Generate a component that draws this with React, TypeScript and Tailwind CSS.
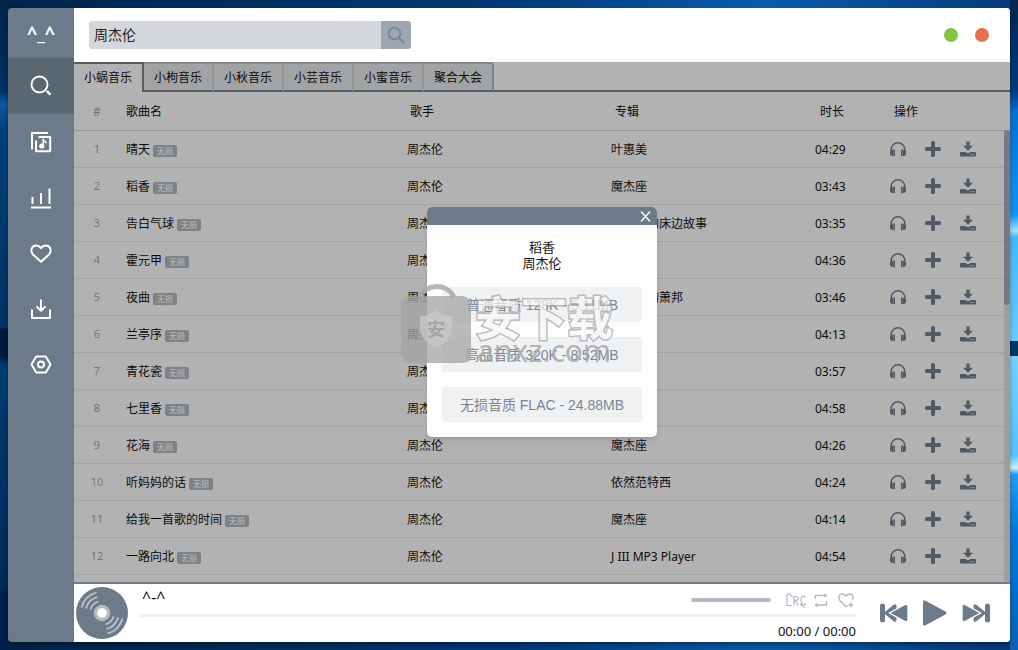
interface Song {
  name: string;
  artist: string;
  album: string;
  duration: string;
}

const sources = ["小蜗音乐", "小枸音乐", "小秋音乐", "小芸音乐", "小蜜音乐", "聚合大会"];

const songs: Song[] = [
  { name: "晴天", artist: "周杰伦", album: "叶惠美", duration: "04:29" },
  { name: "稻香", artist: "周杰伦", album: "魔杰座", duration: "03:43" },
  { name: "告白气球", artist: "周杰伦", album: "周杰伦的床边故事", duration: "03:35" },
  { name: "霍元甲", artist: "周杰伦", album: "霍元甲", duration: "04:36" },
  { name: "夜曲", artist: "周杰伦", album: "十一月的萧邦", duration: "03:46" },
  { name: "兰亭序", artist: "周杰伦", album: "魔杰座", duration: "04:13" },
  { name: "青花瓷", artist: "周杰伦", album: "我很忙", duration: "03:57" },
  { name: "七里香", artist: "周杰伦", album: "七里香", duration: "04:58" },
  { name: "花海", artist: "周杰伦", album: "魔杰座", duration: "04:26" },
  { name: "听妈妈的话", artist: "周杰伦", album: "依然范特西", duration: "04:24" },
  { name: "给我一首歌的时间", artist: "周杰伦", album: "魔杰座", duration: "04:14" },
  { name: "一路向北", artist: "周杰伦", album: "J III MP3 Player", duration: "04:54" },
];

const qualities = [
  "普通音质 128K - 5.11MB",
  "高品音质 320K - 8.52MB",
  "无损音质 FLAC - 24.88MB",
];

const navItems = [
  {
    label: "搜索",
    icon: (
      <>
        <circle cx="9.5" cy="9.5" r="8" />
        <path d="M16.600 15.800 20.500 19.700" strokeWidth="2.600" />
      </>
    ),
  },
  {
    label: "歌单",
    icon: (
      <>
        <path d="M2 18.500V2H18" />
        <path d="M8.500 6H20.200V20.200H6V9.500" />
        <path d="M13.200 15V8.300c.3 1.800 2.600 1.800 2.800 4" strokeWidth="1.600" />
        <circle cx="11.800" cy="15" r="1.600" fill="currentColor" />
      </>
    ),
  },
  {
    label: "排行榜",
    icon: <path d="M1 20.500H21M2.500 17V10M11 17V6M19.500 17V1.500" />,
  },
  {
    label: "收藏",
    icon: (
      <path d="M11 18.800 3.200 11.700C-.2 8.300 1.400 2.500 6.300 2.500c2 0 3.500 1 4.700 2.600C12.200 3.500 13.700 2.500 15.700 2.500c4.900 0 6.500 5.800 3.100 9.200L11 18.800Z" />
    ),
  },
  {
    label: "下载",
    icon: <path d="M2 10.500V19H20V10.500M11 0.500V12M6.500 7.500 11 11.800 15.500 7.500" />,
  },
  {
    label: "设置",
    icon: (
      <>
        <path d="M6.200 1.500H15.800L20.500 9.500 15.800 17.500H6.200L1.500 9.500Z" />
        <circle cx="11" cy="9.500" r="3" />
      </>
    ),
  },
];

function Sidebar() {
  return (
    <nav className="flex w-[66px] shrink-0 flex-col bg-[#6d7a89] text-white">
      <div className="flex h-[50px] items-center justify-center text-lg font-bold">
        ^_^
      </div>
      {navItems.map((item, index) => (
        <button
          key={item.label}
          type="button"
          aria-label={item.label}
          className={`grid h-14 place-items-center ${index === 0 ? "bg-[#5a6670]" : ""}`}
        >
          <svg
            viewBox="0 0 22 22"
            className="size-[22px]"
            fill="none"
            stroke="currentColor"
            strokeWidth="2"
            strokeLinejoin="round"
          >
            {item.icon}
          </svg>
        </button>
      ))}
    </nav>
  );
}

function Header() {
  return (
    <header className="flex h-[54px] shrink-0 items-center justify-between bg-white pr-[21px] pl-[15px]">
      <form className="flex h-7">
        <input
          type="text"
          aria-label="搜索歌曲"
          defaultValue="周杰伦"
          className="w-[292px] rounded-l-[3px] bg-[#d3d7dc] px-[5px] text-sm text-[#222] outline-none"
        />
        <button
          type="button"
          aria-label="搜索"
          className="grid w-[30px] place-items-center rounded-r-[3px] bg-[#9ca7b2] text-[#7b8896]"
        >
          <svg viewBox="0 0 18 18" className="size-[18px]" fill="none" stroke="currentColor">
            <circle cx="7.500" cy="7.500" r="5.800" strokeWidth="2" />
            <path d="M11.800 11.800 16.500 16.500" strokeWidth="2.400" strokeLinecap="round" />
          </svg>
        </button>
      </form>
      <div className="flex gap-[17px]">
        <button type="button" aria-label="最小化" className="size-3.5 rounded-full bg-[#86c440]" />
        <button type="button" aria-label="关闭" className="size-3.5 rounded-full bg-[#e8714d]" />
      </div>
    </header>
  );
}

function SourceTabs() {
  return (
    <div className="flex h-[30px] shrink-0 text-xs">
      {sources.map((source, index) => (
        <button
          key={source}
          type="button"
          className={
            index === 0
              ? "w-[70px] border-t-2 border-r-2 border-[#7a8992]"
              : "w-[70px] border-t-2 border-r-2 border-b-2 border-t-[#bac2c7] border-r-[#cfd4d8] border-b-[#7a8992] bg-[#e8eaec] pt-0.5 last-of-type:rounded-tr-[3px] last-of-type:border-r-[#b0b8be]"
          }
        >
          {source}
        </button>
      ))}
      <div className="flex-1 border-b-2 border-[#7a8992]" />
    </div>
  );
}

function SongActions() {
  return (
    <div className="flex items-center gap-[19px] text-[#718290]">
      <button type="button" aria-label="试听">
        <svg viewBox="0 0 16 16" className="size-4" fill="currentColor">
          <path
            d="M1.200 10.500V8.500a6.800 6.800 0 0 1 13.600 0V10.500"
            fill="none"
            stroke="currentColor"
            strokeWidth="1.500"
          />
          <path d="M3 8.800V15Q0 15 0 12.500V11Q0 9 3 8.800ZM13 8.800V15Q16 15 16 12.500V11Q16 9 13 8.800Z" />
          <path d="M3.300 8.500H5V15.300H3.300ZM11 8.500H12.700V15.300H11Z" />
        </svg>
      </button>
      <button type="button" aria-label="添加">
        <svg viewBox="0 0 16 16" className="size-4" fill="currentColor">
          <rect x="6" width="4" height="16" rx="1.500" />
          <rect y="6" width="16" height="4" rx="1.500" />
        </svg>
      </button>
      <button type="button" aria-label="下载">
        <svg viewBox="0 0 16 16" className="size-4" fill="currentColor">
          <path d="M6.300 0.500h3.400v4.300h3.300L8 9.800 3 4.800h3.300Z" />
          <path
            d="M1 11h4.300L8 12.500 10.700 11H15q1 0 1 1v2.500q0 1-1 1H1q-1 0-1-1V12q0-1 1-1ZM10.800 13v1h1v-1Zm2.400 0v1h1v-1Z"
            fillRule="evenodd"
          />
        </svg>
      </button>
    </div>
  );
}

function SongTable() {
  return (
    <table className="w-full table-fixed text-left text-xs">
      <thead>
        <tr className="h-[38px] border-b border-[#d8d8d8]">
          <th className="w-[46px] pt-0.5 text-center font-normal text-[#aaa]">#</th>
          <th className="px-1.5 pt-0.5 font-normal">歌曲名</th>
          <th className="w-[204px] pt-0.5 pl-[9px] font-normal">歌手</th>
          <th className="w-[204px] pt-0.5 pl-2.5 font-normal">专辑</th>
          <th className="w-[71px] pt-0.5 pl-[11px] font-normal">时长</th>
          <th className="w-[130px] pt-0.5 pl-3.5 font-normal">操作</th>
        </tr>
      </thead>
      <tbody>
        {songs.map((song, index) => (
          <tr key={song.name} className="h-[37px] border-b border-[#ededed]">
            <td className="pt-0.5 text-center text-[11px] text-[#aaa]">{index + 1}</td>
            <td className="px-1.5 pt-0.5">
              <div className="flex items-center gap-[3px]">
                {song.name}
                <span className="mt-[3px] h-3 rounded-[2px] bg-[#b3bbc4] px-1 text-[8px] leading-3 font-medium text-white">
                  无损
                </span>
              </div>
            </td>
            <td className="px-1.5 pt-0.5">{song.artist}</td>
            <td className="px-1.5 pt-0.5">{song.album}</td>
            <td className="px-1.5 pt-0.5">{song.duration}</td>
            <td className="pl-2.5">
              <SongActions />
            </td>
          </tr>
        ))}
      </tbody>
    </table>
  );
}

function Watermark() {
  return (
    <div className="pointer-events-none absolute top-[76px] -left-[26px] flex items-end gap-1">
      <svg viewBox="0 0 70 82" className="h-[82px] w-[70px] shrink-0">
        <path
          d="M19 14A19 19 0 0 1 53 14"
          fill="none"
          stroke="#a9a9a9"
          strokeOpacity="0.85"
          strokeWidth="5"
        />
        <rect y="13" width="70" height="67" rx="9" fill="#a3a3a3" fillOpacity="0.75" />
        <path
          d="M35 27Q42 33 51 33V46Q50 58 35 64 20 58 19 46V33Q28 33 35 27Z"
          fill="#c8c8c8"
          fillOpacity="0.8"
        />
        <text x="35" y="53" textAnchor="middle" fontSize="18" fontWeight="bold" fill="#a5a5a5">
          安
        </text>
      </svg>
      <div className="flex flex-col items-center whitespace-nowrap">
        <span className="text-[46px] leading-10 font-bold text-[#f8f8f9] opacity-70 [-webkit-text-stroke:3px_#a4a4a4] [paint-order:stroke_fill]">
          安下载
        </span>
        <span className="text-3xl leading-7 text-[#a4a6a8] opacity-80">anxz.com</span>
      </div>
    </div>
  );
}

function QualityDialog() {
  return (
    <section
      role="dialog"
      aria-label="选择音质"
      className="relative w-[230px] rounded-[5px] bg-[#fdfdfd] shadow-md"
    >
      <div className="flex h-[18px] items-center justify-end rounded-t-[5px] bg-[#6d7a89] pr-1.5">
        <button type="button" aria-label="关闭" className="text-white">
          <svg viewBox="0 0 11 11" className="size-[11px]" stroke="currentColor" strokeWidth="1.400">
            <path d="M1 0.500 10 10.500M10 0.500 1 10.500" />
          </svg>
        </button>
      </div>
      <div className="px-[15px] pt-3.5 pb-[15px] text-center">
        <h2 className="text-[13px] leading-4">稻香</h2>
        <p className="text-[13px] leading-4">周杰伦</p>
        <div className="mt-4 flex flex-col gap-[15px]">
          {qualities.map((quality) => (
            <button
              key={quality}
              type="button"
              className="h-[35px] rounded-[3px] bg-[#eff1f3] font-['Liberation_Sans','Noto_Sans_CJK_SC',sans-serif] text-sm text-[#7a8694]"
            >
              {quality}
            </button>
          ))}
        </div>
      </div>
      <Watermark />
    </section>
  );
}

function Disc() {
  return (
    <svg viewBox="0 0 52 52" className="size-[52px] shrink-0">
      <circle cx="26" cy="26" r="26" fill="#6d7a89" />
      <g fill="none" stroke="#bcc5ce" strokeWidth="1.800">
        <path d="M5.500 20.500A21.200 21.200 0 0 1 20.500 5.500" />
        <path d="M10 21.500A16.600 16.600 0 0 1 21.500 10" />
        <path d="M14.500 22.500A12 12 0 0 1 22.500 14.500" />
        <path d="M46.500 31.500A21.200 21.200 0 0 1 31.500 46.500" />
        <path d="M42 30.500A16.600 16.600 0 0 1 30.500 42" />
        <path d="M37.500 29.500A12 12 0 0 1 29.500 37.500" />
      </g>
      <circle cx="26" cy="26" r="8.300" fill="#b9b9b9" />
      <circle cx="26" cy="26" r="4.800" fill="#fff" />
    </svg>
  );
}

// Same glyph for both directions, mirrored for "next"
function SkipIcon({ className = "" }: { className?: string }) {
  return (
    <svg viewBox="0 0 28 20" className={`h-5 w-7 ${className}`} fill="currentColor">
      <rect y="0.500" width="5" height="19" rx="2.500" />
      <path d="M3.500 10 14 1.500Q16.500 0.500 16.500 3V17Q16.500 19.500 14 18.500Z" />
      <path
        d="M9.500 10 25 1.500Q28 0.500 28 3.500V16.500Q28 19.500 25 18.500Z"
        stroke="#fff"
        strokeWidth="1.400"
      />
    </svg>
  );
}

function Player() {
  return (
    <footer className="flex h-[60px] shrink-0 items-center border-t-2 border-[#6d7a89] bg-white pr-5 pl-0.5">
      <Disc />
      <div className="ml-3 flex flex-1 flex-col text-[13px]">
        <div className="flex h-7 items-center justify-between">
          <span className="pb-1.5 pl-0.5 text-base">^-^</span>
          <div className="flex items-center text-[#b4bbc4]">
            <div className="mr-[15px] h-1 w-20 rounded-full bg-[#b4bbc4]" />
            <button type="button" aria-label="歌词" className="mr-2">
              <svg viewBox="0 0 20 16" className="h-4 w-5" fill="none" stroke="currentColor" strokeWidth="1.200">
                <path d="M1 2V13.500H6M8 13.500V5M8 4.500H10.500Q13 5 12.500 7 12 8.500 9 8.500L12.500 13.500M19.500 5Q15.500 2.500 15 7.500 15 12 17.500 13 19.500 13 19.500 11M2 1 7 5M14 12 18.500 15.500" />
              </svg>
            </button>
            <button type="button" aria-label="循环播放" className="mr-2.5">
              <svg viewBox="0 0 14 16" className="h-4 w-3.5" fill="none" stroke="currentColor" strokeWidth="1.400">
                <path d="M1.500 7V3.500H12M1 13H12.500V9" />
                <path d="M10.500 1 13.500 3.500 10.500 6ZM3.500 10.500.500 13 3.500 15.500Z" fill="currentColor" strokeWidth="0" />
              </svg>
            </button>
            <button type="button" aria-label="收藏" className="mr-0.5">
              <svg viewBox="0 0 16 16" className="size-4" fill="none" stroke="currentColor" strokeWidth="1.400">
                <path d="M9.500 13.500 8 14.500 2.300 9C-.500 6 1 2 4.300 2 6 2 7 2.700 8 4 9 2.700 10 2 11.700 2 15 2 16.300 6 13.800 8.500M12.800 10.500V15.500M10.300 13H15.300" />
              </svg>
            </button>
          </div>
        </div>
        <progress
          aria-label="播放进度"
          value={0}
          max={100}
          className="block h-[3px] w-full appearance-none bg-[#efefef] [&::-webkit-progress-bar]:bg-[#efefef]"
        />
        <span className="mt-1 self-end leading-5">00:00 / 00:00</span>
      </div>
      <div className="ml-6 flex items-center gap-[15px] text-[#6d7a89]">
        <button type="button" aria-label="上一首">
          <SkipIcon />
        </button>
        <button type="button" aria-label="播放">
          <svg viewBox="0 0 24 26" className="h-[26px] w-6" fill="currentColor">
            <path d="M0 2Q0-.500 2.500.700L22.500 11.500Q24.500 13 22.500 14.500L2.500 25.300Q0 26.500 0 24Z" />
          </svg>
        </button>
        <button type="button" aria-label="下一首">
          <SkipIcon className="-scale-x-100" />
        </button>
      </div>
    </footer>
  );
}

function App() {
  return (
    <div className="flex h-screen p-2 font-['Noto_Sans','Noto_Sans_CJK_SC',sans-serif] text-[#111] [background:linear-gradient(180deg,#02264f,#033a78_14%,#0a6fd0_17%,#1593ee_33%,#a5e2fb_35.5%,#48b8f5_36.5%,#6ccbf8_52.5%,#04335f_52.5%,#04335f_54.8%,#7ad0f8_54.8%,#5cc2f5_70%,#d0effc_72%,#2a9bea_73%,#0877d8_82%,#0a62b8)_right/8px_100%_no-repeat,linear-gradient(180deg,#00234a,#003364_14%,#0a5aa8_16%,#004079_20%,#003465_50.5%,#001c3c_50.5%,#001c3c_55%,#003d73_56%,#002b58_90%,#00204a_91%)_left/8px_100%_no-repeat,linear-gradient(90deg,#00234a,#003a78_50%,#0a5cae_75%,#053a78)]">
      <div className="flex min-w-0 flex-1 overflow-hidden rounded shadow-md shadow-black/30">
        <Sidebar />
        <div className="flex min-w-0 flex-1 flex-col bg-white">
          <Header />
          <main className="relative flex min-h-0 flex-1 flex-col overflow-hidden">
            <SourceTabs />
            <div className="relative min-h-0 flex-1 overflow-hidden">
              <SongTable />
              <div className="absolute top-[38px] right-0 bottom-0 w-1.5 bg-[#dee2e5]">
                <div className="h-[175px] rounded-full bg-[#a8b1bb]" />
              </div>
            </div>
            <div className="absolute inset-0 grid place-items-center bg-black/30">
              <QualityDialog />
            </div>
          </main>
          <Player />
        </div>
      </div>
    </div>
  );
}

export default App;
